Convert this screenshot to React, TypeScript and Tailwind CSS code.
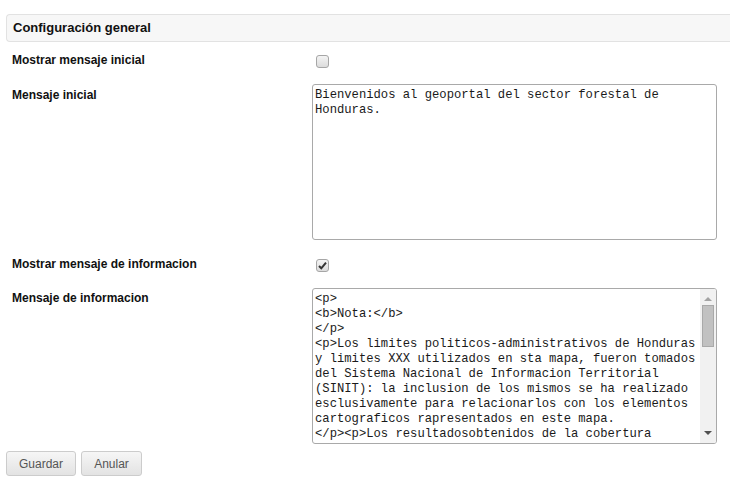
const infoLines = [
  "<p>",
  "<b>Nota:</b>",
  "</p>",
  "<p>Los limites politicos-administrativos de Honduras",
  "y limites XXX utilizados en sta mapa, fueron tomados",
  "del Sistema Nacional de Informacion Territorial",
  "(SINIT): la inclusion de los mismos se ha realizado",
  "esclusivamente para relacionarlos con los elementos",
  "cartograficos rapresentados en este mapa.",
  "</p><p>Los resultadosobtenidos de la cobertura",
];

function Checkbox({ checked }: { checked: boolean }) {
  return (
    <div className="mt-[3px] ml-[4px] flex h-[13px] w-[13px] items-center justify-center rounded-[3px] border border-[#a6a6a6] bg-gradient-to-b from-[#f4f4f4] to-[#dcdcdc]">
      {checked ? (
        <svg width="9" height="9" viewBox="0 0 9 9">
          <path d="M1 5 L3.3 7.3 L8 1.6" fill="none" stroke="#333" strokeWidth="2" />
        </svg>
      ) : null}
    </div>
  );
}

function FakeTextarea({ lines, scroll }: { lines: string[]; scroll?: boolean }) {
  return (
    <div className="flex h-[156px] w-[405px] overflow-hidden rounded-[3px] border border-[#a9a9a9] bg-white">
      <div className="min-w-0 flex-1 overflow-hidden pl-[2px] pt-[3px] font-['Liberation_Mono',monospace] text-[12.2px] leading-[15px] text-[#1a1a1a] whitespace-pre">
        {lines.map((l, i) => (
          <div key={i}>{l}</div>
        ))}
      </div>
      {scroll ? (
        <div className="flex w-[16px] flex-col items-center bg-[#f1f1f1]">
          <svg width="8" height="5" viewBox="0 0 8 5" className="mt-[7px]">
            <path d="M0 5 L4 1 L8 5 Z" fill="#a3a3a3" />
          </svg>
          <div className="mt-[4px] h-[42px] w-[12px] border border-[#a9a9a9] bg-[#c1c1c1]" />
          <div className="flex-1" />
          <svg width="8" height="5" viewBox="0 0 8 5" className="mb-[7px]">
            <path d="M0 0 L8 0 L4 4 Z" fill="#505050" />
          </svg>
        </div>
      ) : null}
    </div>
  );
}

function Button({ label, width }: { label: string; width: string }) {
  return (
    <button
      className={`${width} h-[25px] rounded-[3px] border border-[#cccccc] bg-gradient-to-b from-[#f6f6f6] to-[#e3e3e3] text-[12px] text-[#555555] font-['Liberation_Sans',Arial,sans-serif]`}
    >
      {label}
    </button>
  );
}

export default function App() {
  return (
    <div className="h-[487px] w-[730px] overflow-hidden bg-white pl-[6px] font-['Liberation_Sans',Arial,sans-serif] text-[#111111]">
      <div className="mt-[14px] flex h-[28px] items-center rounded-l-[4px] border border-r-0 border-[#e2e2e2] bg-[#f7f7f7] pl-[6px] text-[13px] font-bold">
        Configuración general
      </div>

      <div className="mt-[10px] flex items-start">
        <div className="w-[306px] pl-[6px] text-[12px] font-bold leading-[16px]">Mostrar mensaje inicial</div>
        <Checkbox checked={false} />
      </div>

      <div className="mt-[16px] flex items-start">
        <div className="w-[306px] pl-[6px] pt-[3px] text-[12px] font-bold leading-[16px]">Mensaje inicial</div>
        <FakeTextarea lines={["Bienvenidos al geoportal del sector forestal de", "Honduras."]} />
      </div>

      <div className="mt-[16px] flex items-start">
        <div className="w-[306px] pl-[6px] text-[12px] font-bold leading-[16px]">Mostrar mensaje de informacion</div>
        <Checkbox checked={true} />
      </div>

      <div className="mt-[16px] flex items-start">
        <div className="w-[306px] pl-[6px] pt-[2px] text-[12px] font-bold leading-[16px]">Mensaje de informacion</div>
        <FakeTextarea lines={infoLines} scroll />
      </div>

      <div className="mt-[7px] flex gap-[5px]">
        <Button label="Guardar" width="w-[70px]" />
        <Button label="Anular" width="w-[61px]" />
      </div>
    </div>
  );
}
